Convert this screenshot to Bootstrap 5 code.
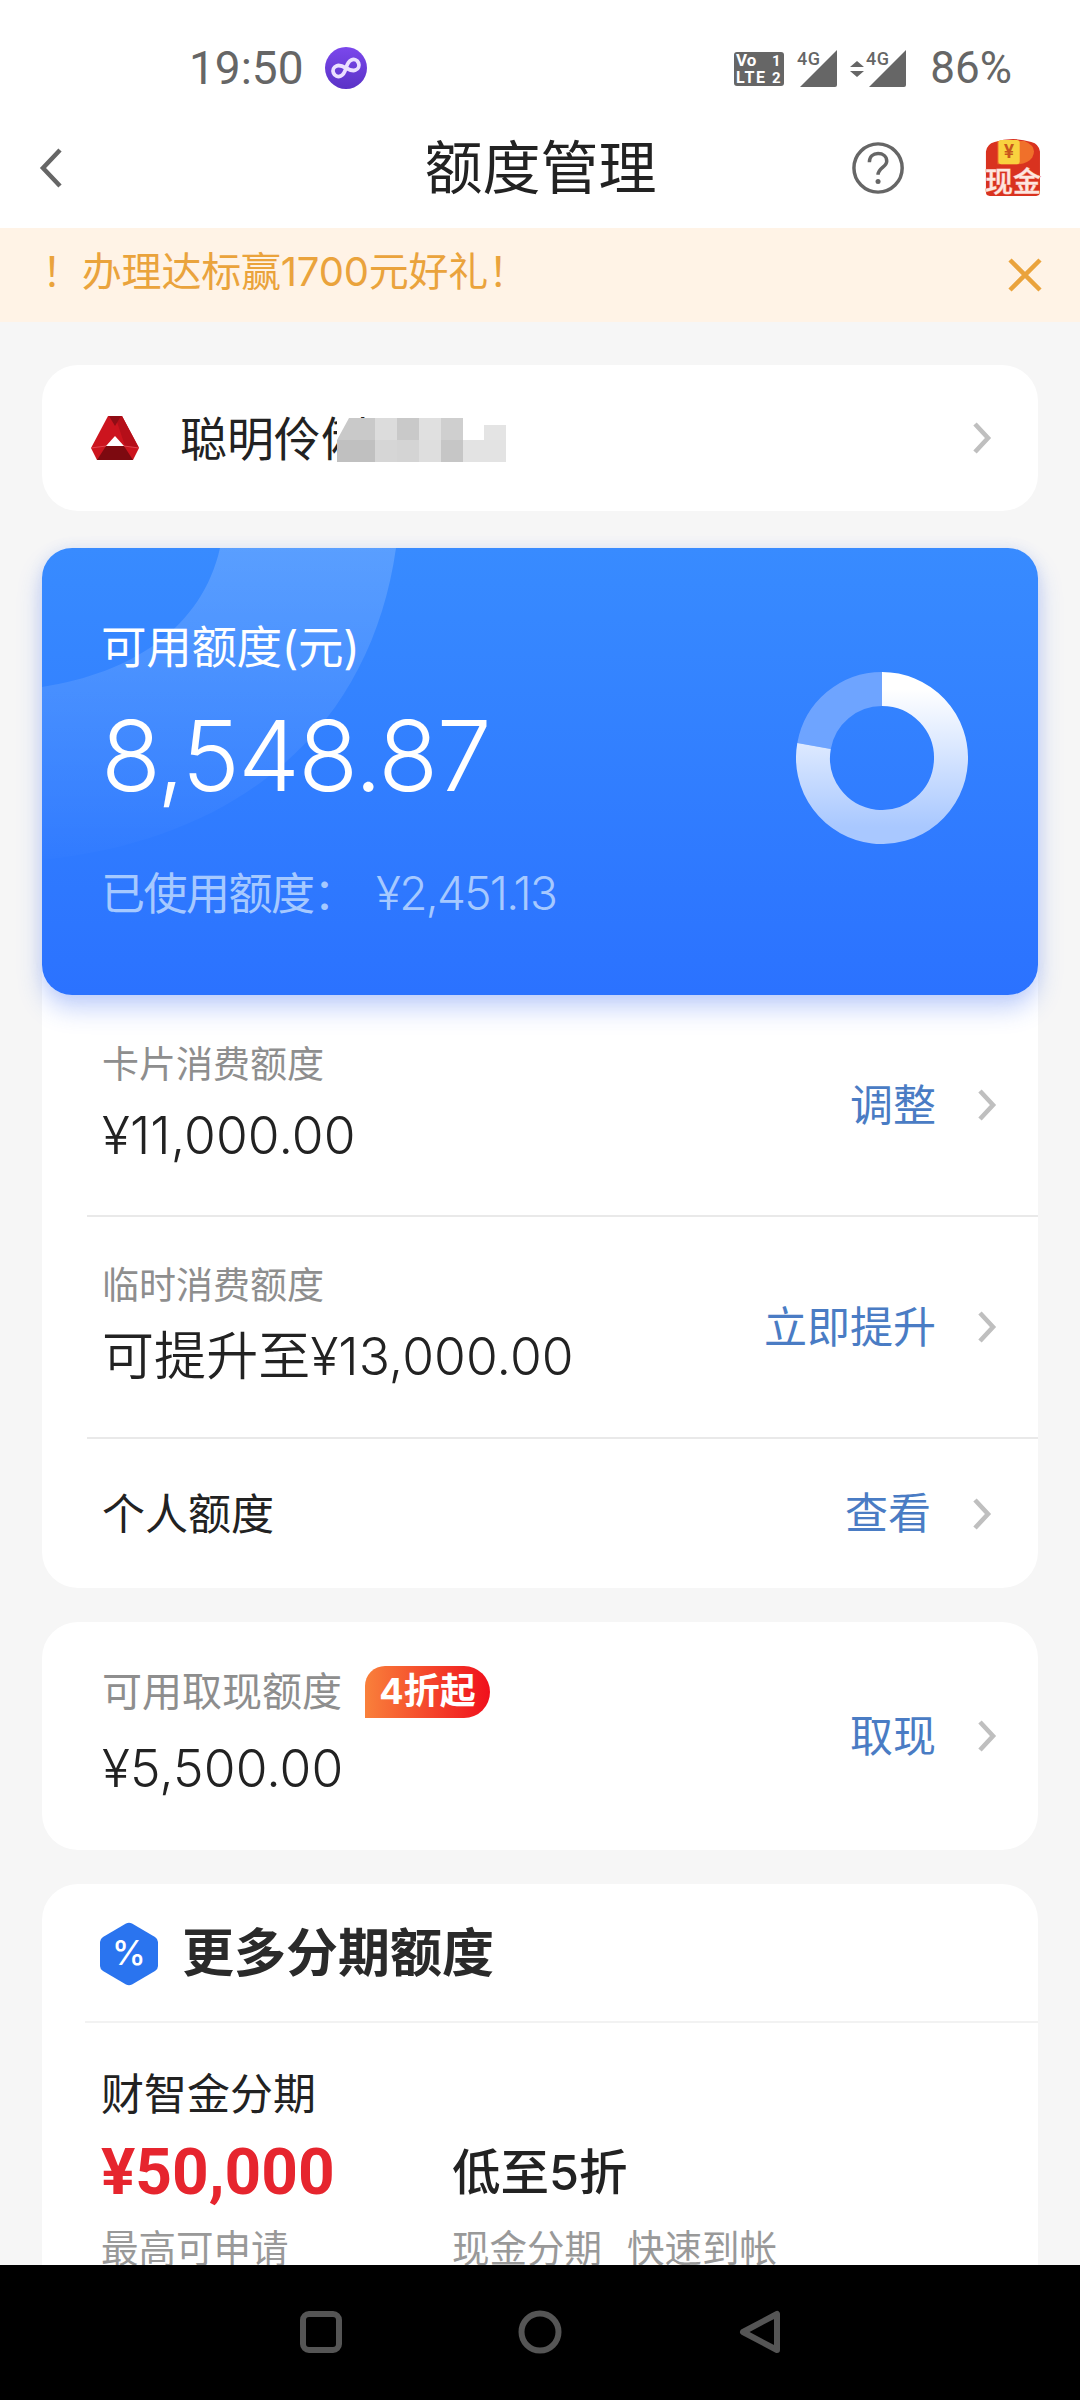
<!DOCTYPE html>
<html lang="zh-CN">
<head>
  <meta charset="UTF-8" />
  <meta name="viewport" content="width=device-width, initial-scale=1.0" />
  <title>额度管理</title>
  <link href="https://cdn.jsdelivr.net/npm/bootstrap@5.3.0/dist/css/bootstrap.min.css" rel="stylesheet" />
  <style>
    html, body { margin: 0; background: #000; }
    body { font-family: Inter, "Noto Sans CJK SC", sans-serif; color: #222; }
    .phone { width: 1080px; height: 2400px; background: #f6f6f6; overflow: hidden; }

    /* status bar */
    .status-line { height: 108px; background: #fff; padding: 28px 68px 0 189px; color: #666; font-family: Roboto, sans-serif; font-size: 44px; }
    .status-num { line-height: 1; }
    .status-time { font-size: 46px; line-height: 1; }
    .app-dot { width: 42px; height: 42px; margin-left: 21px; }
    .pct { margin-left: 22px; }

    /* title bar */
    .title-bar { height: 120px; background: #fff; padding: 0 38px 0 39px; }
    .bar-side { width: 190px; }
    .bar-title { font-size: 58px; line-height: 1; color: #222; }
    .help-icon { margin-right: 80px; }

    /* notice */
    .notice-bar { height: 94px; background: #fff3e6; padding: 0 37px 6px 42px; color: #eaa33c; font-size: 40px; letter-spacing: -.2px; }
    .notice-close { margin-top: 6px; }

    .page-body { padding: 43px 42px 0; min-height: 0; }
    .white-box { background: #fff; border: 0; border-radius: 36px; }

    /* bank row */
    .bank-box { height: 146px; margin-bottom: 37px; padding: 0 46px 0 49px; }
    .bank-name { font-size: 47px; margin-left: 41px; line-height: 1; }
    .mosaic { position: absolute; left: 295px; top: 53px; }

    /* blue card */
    .quota-box { height: 447px; border-radius: 30px; background: linear-gradient(180deg, #388bff, #2b72ff); padding: 72px 0 0 59px; z-index: 2; overflow: visible; box-shadow: 0 0 14px rgba(80, 120, 240, .12), 0 14px 24px rgba(50, 100, 240, .28); color: #fff; }
    .quota-deco { position: absolute; left: 0; top: 0; border-radius: 30px; }
    .quota-label { font-size: 45.5px; line-height: 56px; letter-spacing: -.3px; position: relative; }
    .quota-num { font-size: 98px; line-height: 110px; margin-top: 25px; letter-spacing: -1.6px; font-weight: 300; position: relative; }
    .quota-used { font-size: 44px; line-height: 56px; margin-top: 54px; color: #a6c9ff; letter-spacing: -1.5px; position: relative; }
    .quota-used b { font-weight: 300; font-size: 46px; letter-spacing: -1.7px; margin-left: 20px; }
    .ring { position: absolute; left: 754px; top: 124px; }

    /* quota rows */
    .rows-box { height: 623px; margin-top: -30px; padding-top: 30px; border-radius: 0 0 36px 36px; margin-bottom: 34px; }
    .quota-row { margin-left: 45px; padding: 0 41px 0 15px; border-bottom: 2px solid #e9e9e9; height: 222px; }
    .quota-row.row-last { border-bottom: 0; height: 149px; }
    .row-label { font-size: 37px; line-height: 46px; color: #8e8e8e; margin-bottom: 17px; }
    .row-value { font-size: 51.5px; font-weight: 350; line-height: 60px; color: #222; letter-spacing: .1px; }
    .value-prefix { font-size: 52px; }
    .row-plain { font-size: 43px; color: #222; line-height: 1; padding-top: 2px; }
    .row-action { font-size: 43px; color: #4a7cc4; line-height: 1; margin-right: 41px; }
    .row-text { padding-bottom: 4px; }
    .row-last .row-chev { margin-right: 5px; }

    /* cash */
    .cash-box { height: 228px; margin-bottom: 34px; padding: 0 41px 0 60px; }
    .cash-text { padding-bottom: 8px; }
    .cash-label { font-size: 40px; line-height: 52px; color: #8e8e8e; margin-bottom: 20px; }
    .cash-tag { display: inline-block; width: 125px; height: 52px; margin-left: 23px; line-height: 50px; text-align: center; font-size: 36px; font-weight: 700; color: #fff; border-radius: 20px 26px 26px 0; background: linear-gradient(90deg, #f9803b, #f0101c); }

    /* more */
    .more-box { height: 600px; border-radius: 36px 36px 0 0; }
    .more-head { height: 139px; margin-left: 43px; padding: 3px 0 0 15px; border-bottom: 2px solid #f2f2f2; }
    .more-title { font-size: 52px; font-weight: 700; margin-left: 24px; color: #2a2a2a; line-height: 1; }
    .more-body { padding: 41px 0 0 59px; }
    .plan-name { font-size: 43px; line-height: 60px; }
    .plan-cols { margin-top: 11px; }
    .plan-left { width: 351px; }
    .plan-amount { font-family: Roboto, sans-serif; font-size: 64px; font-weight: 700; color: #e6252e; line-height: 76px; }
    .plan-rate { font-size: 48.5px; font-weight: 500; line-height: 76px; color: #222; }
    .plan-note { font-size: 37.5px; line-height: 50px; color: #999; margin-top: 13px; white-space: pre; word-spacing: 2px; }

    /* android nav */
    .nav-strip { height: 135px; background: #000; gap: 150px; padding-bottom: 1px; }
  </style>
</head>
<body>
  <div class="phone d-flex flex-column">
    <!-- status bar -->
    <div class="status-line d-flex align-items-center justify-content-between flex-shrink-0">
      <div class="d-flex align-items-center">
        <span class="status-time">19:50</span>
        <svg class="app-dot" viewBox="0 0 42 42">
          <defs>
            <linearGradient id="dotFill" x1="0" y1="0" x2="0" y2="1">
              <stop offset="0" stop-color="#7b47ec"/>
              <stop offset="1" stop-color="#5a32c6"/>
            </linearGradient>
          </defs>
          <circle cx="21" cy="21" r="21" fill="url(#dotFill)"/>
          <path transform="rotate(-22 21 21)" d="M21 21c-3-3.8-5-5.500-8-5.500a5.500 5.500 0 0 0 0 11c3 0 5-1.700 8-5.500s5-5.500 8-5.500a5.500 5.500 0 0 1 0 11c-3 0-5-1.700-8-5.500z" fill="none" stroke="#eadfff" stroke-width="3.8"/>
        </svg>
      </div>
      <div class="d-flex align-items-center">
        <svg width="174" height="40" viewBox="0 0 174 40">
          <rect x="0" y="4" width="50" height="34" rx="3" fill="#666"/>
          <text x="2" y="18" font-size="17" font-weight="700" fill="#fff" font-family="Roboto">Vo</text>
          <text x="2" y="35" font-size="16" font-weight="700" fill="#fff" font-family="Roboto" textLength="29">LTE</text>
          <text x="38" y="18" font-size="15" font-weight="700" fill="#fff" font-family="Roboto">1</text>
          <text x="38" y="35" font-size="15" font-weight="700" fill="#fff" font-family="Roboto">2</text>
          <path d="M66 39 103 2v35q0 2-2 2z" fill="#666"/>
          <text x="63" y="17" font-size="18" font-weight="500" fill="#666" font-family="Roboto" textLength="23">4G</text>
          <path d="M116 19l7-6 7 6zM116 23h14l-7 6z" fill="#666"/>
          <path d="M135 39 172 2v35q0 2-2 2z" fill="#666"/>
          <text x="132" y="17" font-size="18" font-weight="500" fill="#666" font-family="Roboto" textLength="23">4G</text>
        </svg>
        <span class="status-num pct">86%</span>
      </div>
    </div>

    <!-- title bar -->
    <div class="title-bar d-flex align-items-center justify-content-between flex-shrink-0">
      <div class="bar-side">
        <svg width="24" height="42" viewBox="0 0 24 42"><path d="M21 3 4 21l17 18" fill="none" stroke="#666" stroke-width="4.5"/></svg>
      </div>
      <div class="bar-title">额度管理</div>
      <div class="bar-side d-flex align-items-center justify-content-end">
        <svg class="help-icon" width="54" height="54" viewBox="0 0 54 54">
          <circle cx="27" cy="27" r="25" fill="none" stroke="#666" stroke-width="3.6"/>
          <path d="M18 21c0-6 4-9 9-9s9 3 9 8c0 6-9 7-9 14" fill="none" stroke="#666" stroke-width="3.6"/>
          <circle cx="27" cy="41" r="2.6" fill="#666"/>
        </svg>
        <svg width="60" height="62" viewBox="0 0 60 62">
          <path d="M2 14Q3 6 11 4 30-2 49 4 57 6 58 14V56q0 4-4 4H6q-4 0-4-4z" fill="#d9321f"/>
          <path d="M14 3 42 3Q56 9 50 20 46 26 36 27H14z" fill="#f0702a"/>
          <rect x="15" y="2" width="22" height="25" rx="3" fill="#f9d23f"/>
          <text x="26" y="21" text-anchor="middle" font-size="19" font-weight="700" fill="#c8561c" font-family="Inter">¥</text>
          <text x="30" y="56" text-anchor="middle" font-size="29" font-weight="500" fill="#fde6df" stroke="#ef8f82" stroke-width="1" paint-order="stroke" font-family="Noto Sans CJK SC">现金</text>
        </svg>
      </div>
    </div>

    <!-- notice -->
    <div class="notice-bar d-flex align-items-center justify-content-between flex-shrink-0">
      <span>！办理达标赢1700元好礼！</span>
      <svg class="notice-close" width="36" height="36" viewBox="0 0 36 36"><path d="M3 3 33 33M33 3 3 33" fill="none" stroke="#eaa33c" stroke-width="4.5"/></svg>
    </div>

    <div class="page-body flex-grow-1 overflow-hidden">
      <!-- bank -->
      <div class="white-box bank-box position-relative d-flex align-items-center justify-content-between">
        <div class="d-flex align-items-center">
          <svg width="48" height="44" viewBox="0 0 48 44">
            <path d="M17 0H31L48 32 42 44H6L0 32z" fill="#cc141e"/>
            <path d="M24 0H31L48 32 34 30z" fill="#b50f19"/>
            <path d="M18 0H30L24 10z" fill="#8f0d15"/>
            <path d="M24 20 33 30H15z" fill="#fff"/>
            <path d="M15 30H33L42 44H6z" fill="#7d0a10"/>
            <path d="M0 32 15 30M48 32 33 30" fill="none" stroke="#e8505a" stroke-width=".8"/>
          </svg>
          <span class="bank-name">聪明伶俐</span>
        </div>
        <!-- mosaic over the hidden part of the name -->
        <svg class="mosaic" width="169" height="44" viewBox="0 0 169 44">
          <defs><filter id="soft"><feGaussianBlur stdDeviation=".6"/></filter></defs>
          <rect width="169" height="44" fill="#fff"/>
          <g filter="url(#soft)">
            <path d="M12 0H38V22H0z" fill="#c9c9c9"/>
            <rect x="38" width="22" height="22" fill="#dcdcdc"/>
            <rect x="60" width="22" height="22" fill="#c9c9c9"/>
            <rect x="82" width="22" height="22" fill="#e0e0e0"/>
            <rect x="104" width="22" height="22" fill="#cfcfcf"/>
            <rect x="147" y="7" width="22" height="15" fill="#e4e4e4"/>
            <path d="M0 22H38V44H-4z" fill="#c0c0c0"/>
            <rect x="38" y="22" width="22" height="22" fill="#d6d6d6"/>
            <rect x="60" y="22" width="22" height="22" fill="#d4d4d4"/>
            <rect x="82" y="22" width="22" height="22" fill="#dedede"/>
            <rect x="104" y="22" width="22" height="22" fill="#c6c6c6"/>
            <rect x="126" y="22" width="43" height="22" fill="#e3e3e3"/>
          </g>
        </svg>
        <svg width="20" height="34" viewBox="0 0 20 34"><path d="M3 3 16 17 3 31" fill="none" stroke="#bfbfbf" stroke-width="4.6"/></svg>
      </div>

      <!-- available quota -->
      <div class="white-box quota-box position-relative">
        <svg class="quota-deco" width="996" height="447" viewBox="0 0 996 447">
          <defs>
            <linearGradient id="decoFill" x1="0" y1="0" x2="0" y2="1">
              <stop offset="0" stop-color="#fff" stop-opacity=".17"/>
              <stop offset="1" stop-color="#fff" stop-opacity=".01"/>
            </linearGradient>
          </defs>
          <path d="M178 0C160 80 90 125 0 139V312C210 290 330 170 354 0z" fill="url(#decoFill)"/>
        </svg>
        <div class="quota-label">可用额度(元)</div>
        <div class="quota-num">8,548.87</div>
        <div class="quota-used">已使用额度：<b>¥2,451.13</b></div>
        <svg class="ring" width="172" height="172" viewBox="0 0 172 172">
          <defs>
            <linearGradient id="ringFill" x1="0" y1="0" x2="0" y2="1">
              <stop offset="0" stop-color="#fff"/>
              <stop offset="1" stop-color="#a9c8ff"/>
            </linearGradient>
          </defs>
          <path d="M18.05 74.02A69 69 0 0 1 86 17" fill="none" stroke="#6ea4ff" stroke-width="34"/>
          <path d="M86 17A69 69 0 1 1 18.05 74.02" fill="none" stroke="url(#ringFill)" stroke-width="34"/>
        </svg>
      </div>

      <!-- quota rows -->
      <div class="white-box rows-box">
        <div class="quota-row d-flex align-items-center justify-content-between">
          <div class="row-text">
            <div class="row-label">卡片消费额度</div>
            <div class="row-value">¥11,000.00</div>
          </div>
          <div class="d-flex align-items-center">
            <span class="row-action">调整</span>
            <svg class="row-chev" width="20" height="34" viewBox="0 0 20 34"><path d="M3 3 16 17 3 31" fill="none" stroke="#bfbfbf" stroke-width="4.6"/></svg>
          </div>
        </div>
        <div class="quota-row d-flex align-items-center justify-content-between">
          <div class="row-text">
            <div class="row-label">临时消费额度</div>
            <div class="row-value"><span class="value-prefix">可提升至</span>¥13,000.00</div>
          </div>
          <div class="d-flex align-items-center">
            <span class="row-action">立即提升</span>
            <svg class="row-chev" width="20" height="34" viewBox="0 0 20 34"><path d="M3 3 16 17 3 31" fill="none" stroke="#bfbfbf" stroke-width="4.6"/></svg>
          </div>
        </div>
        <div class="quota-row row-last d-flex align-items-center justify-content-between">
          <div class="row-plain">个人额度</div>
          <div class="d-flex align-items-center">
            <span class="row-action">查看</span>
            <svg class="row-chev" width="20" height="34" viewBox="0 0 20 34"><path d="M3 3 16 17 3 31" fill="none" stroke="#bfbfbf" stroke-width="4.6"/></svg>
          </div>
        </div>
      </div>

      <!-- cash -->
      <div class="white-box cash-box d-flex align-items-center justify-content-between">
        <div class="cash-text">
          <div class="cash-label d-flex align-items-center">可用取现额度<span class="cash-tag">4折起</span></div>
          <div class="row-value">¥5,500.00</div>
        </div>
        <div class="d-flex align-items-center">
          <span class="row-action">取现</span>
          <svg width="20" height="34" viewBox="0 0 20 34"><path d="M3 3 16 17 3 31" fill="none" stroke="#bfbfbf" stroke-width="4.6"/></svg>
        </div>
      </div>

      <!-- more -->
      <div class="white-box more-box">
        <div class="more-head d-flex align-items-center">
          <svg width="58" height="64" viewBox="0 0 58 64">
            <path d="M26 1.500q3-1.500 6 0L55 15q3 2 3 5v24q0 3-3 5L32 62.500q-3 1.500-6 0L3 49q-3-2-3-5V20q0-3 3-5z" fill="#2a74ef"/>
            <text x="29" y="43" text-anchor="middle" font-size="34" font-weight="500" fill="#fff" font-family="Inter">%</text>
          </svg>
          <span class="more-title">更多分期额度</span>
        </div>
        <div class="more-body">
          <div class="plan-name">财智金分期</div>
          <div class="plan-cols d-flex">
            <div class="plan-left">
              <div class="plan-amount">¥50,000</div>
              <div class="plan-note">最高可申请</div>
            </div>
            <div>
              <div class="plan-rate">低至5折</div>
              <div class="plan-note">现金分期  快速到帐</div>
            </div>
          </div>
        </div>
      </div>
    </div>

    <!-- android nav -->
    <div class="nav-strip d-flex align-items-center justify-content-center flex-shrink-0">
      <svg width="70" height="46" viewBox="0 0 70 46"><rect x="18" y="5" width="36" height="36" rx="6" fill="none" stroke="#555" stroke-width="6"/></svg>
      <svg width="70" height="46" viewBox="0 0 70 46"><circle cx="35" cy="23" r="18.5" fill="none" stroke="#555" stroke-width="6"/></svg>
      <svg width="70" height="46" viewBox="0 0 70 46"><path d="M52 5v36L18 23z" fill="none" stroke="#555" stroke-width="6" stroke-linejoin="round"/></svg>
    </div>
  </div>
  <script src="https://cdn.jsdelivr.net/npm/bootstrap@5.3.0/dist/js/bootstrap.bundle.min.js"></script>
</body>
</html>
